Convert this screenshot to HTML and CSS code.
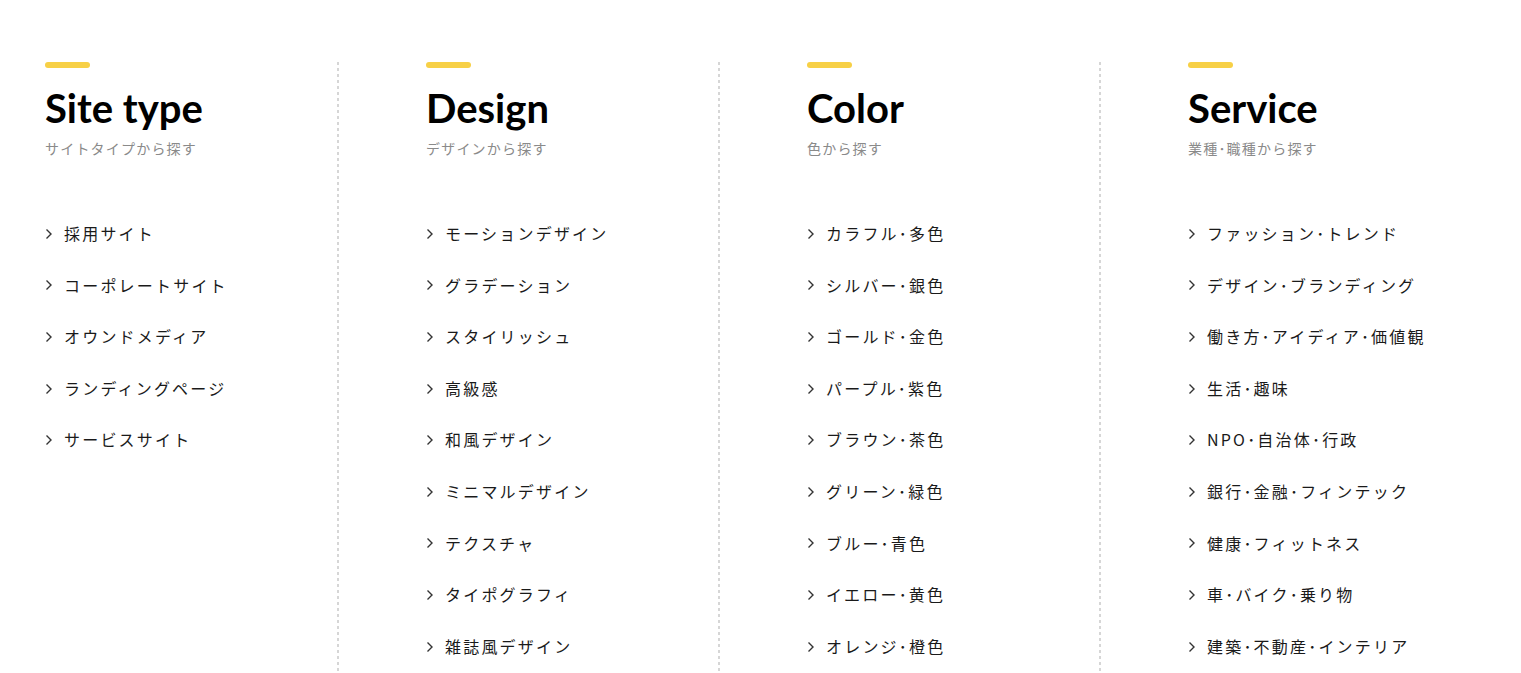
FILE: index.html
```html
<!DOCTYPE html>
<html lang="ja">
<head>
<meta charset="utf-8">
<title>Categories</title>
<link rel="stylesheet" href="styles.css">
</head>
<body>
<div class="cats">
  <section class="col">
    <span class="bar"></span>
    <h2 class="title">Site type</h2>
    <p class="sub">サイトタイプから探す</p>
    <ul class="list">
      <li><svg class="chev" viewBox="0 0 8 12"><polyline points="1.5,1.5 6,6 1.5,10.5"/></svg>採用サイト</li>
      <li><svg class="chev" viewBox="0 0 8 12"><polyline points="1.5,1.5 6,6 1.5,10.5"/></svg>コーポレートサイト</li>
      <li><svg class="chev" viewBox="0 0 8 12"><polyline points="1.5,1.5 6,6 1.5,10.5"/></svg>オウンドメディア</li>
      <li><svg class="chev" viewBox="0 0 8 12"><polyline points="1.5,1.5 6,6 1.5,10.5"/></svg>ランディングページ</li>
      <li><svg class="chev" viewBox="0 0 8 12"><polyline points="1.5,1.5 6,6 1.5,10.5"/></svg>サービスサイト</li>
    </ul>
  </section>
  <section class="col">
    <span class="bar"></span>
    <h2 class="title">Design</h2>
    <p class="sub">デザインから探す</p>
    <ul class="list">
      <li><svg class="chev" viewBox="0 0 8 12"><polyline points="1.5,1.5 6,6 1.5,10.5"/></svg>モーションデザイン</li>
      <li><svg class="chev" viewBox="0 0 8 12"><polyline points="1.5,1.5 6,6 1.5,10.5"/></svg>グラデーション</li>
      <li><svg class="chev" viewBox="0 0 8 12"><polyline points="1.5,1.5 6,6 1.5,10.5"/></svg>スタイリッシュ</li>
      <li><svg class="chev" viewBox="0 0 8 12"><polyline points="1.5,1.5 6,6 1.5,10.5"/></svg>高級感</li>
      <li><svg class="chev" viewBox="0 0 8 12"><polyline points="1.5,1.5 6,6 1.5,10.5"/></svg>和風デザイン</li>
      <li><svg class="chev" viewBox="0 0 8 12"><polyline points="1.5,1.5 6,6 1.5,10.5"/></svg>ミニマルデザイン</li>
      <li><svg class="chev" viewBox="0 0 8 12"><polyline points="1.5,1.5 6,6 1.5,10.5"/></svg>テクスチャ</li>
      <li><svg class="chev" viewBox="0 0 8 12"><polyline points="1.5,1.5 6,6 1.5,10.5"/></svg>タイポグラフィ</li>
      <li><svg class="chev" viewBox="0 0 8 12"><polyline points="1.5,1.5 6,6 1.5,10.5"/></svg>雑誌風デザイン</li>
    </ul>
  </section>
  <section class="col">
    <span class="bar"></span>
    <h2 class="title">Color</h2>
    <p class="sub">色から探す</p>
    <ul class="list">
      <li><svg class="chev" viewBox="0 0 8 12"><polyline points="1.5,1.5 6,6 1.5,10.5"/></svg>カラフル･多色</li>
      <li><svg class="chev" viewBox="0 0 8 12"><polyline points="1.5,1.5 6,6 1.5,10.5"/></svg>シルバー･銀色</li>
      <li><svg class="chev" viewBox="0 0 8 12"><polyline points="1.5,1.5 6,6 1.5,10.5"/></svg>ゴールド･金色</li>
      <li><svg class="chev" viewBox="0 0 8 12"><polyline points="1.5,1.5 6,6 1.5,10.5"/></svg>パープル･紫色</li>
      <li><svg class="chev" viewBox="0 0 8 12"><polyline points="1.5,1.5 6,6 1.5,10.5"/></svg>ブラウン･茶色</li>
      <li><svg class="chev" viewBox="0 0 8 12"><polyline points="1.5,1.5 6,6 1.5,10.5"/></svg>グリーン･緑色</li>
      <li><svg class="chev" viewBox="0 0 8 12"><polyline points="1.5,1.5 6,6 1.5,10.5"/></svg>ブルー･青色</li>
      <li><svg class="chev" viewBox="0 0 8 12"><polyline points="1.5,1.5 6,6 1.5,10.5"/></svg>イエロー･黄色</li>
      <li><svg class="chev" viewBox="0 0 8 12"><polyline points="1.5,1.5 6,6 1.5,10.5"/></svg>オレンジ･橙色</li>
    </ul>
  </section>
  <section class="col last">
    <span class="bar"></span>
    <h2 class="title">Service</h2>
    <p class="sub">業種･職種から探す</p>
    <ul class="list">
      <li><svg class="chev" viewBox="0 0 8 12"><polyline points="1.5,1.5 6,6 1.5,10.5"/></svg>ファッション･トレンド</li>
      <li><svg class="chev" viewBox="0 0 8 12"><polyline points="1.5,1.5 6,6 1.5,10.5"/></svg>デザイン･ブランディング</li>
      <li><svg class="chev" viewBox="0 0 8 12"><polyline points="1.5,1.5 6,6 1.5,10.5"/></svg>働き方･アイディア･価値観</li>
      <li><svg class="chev" viewBox="0 0 8 12"><polyline points="1.5,1.5 6,6 1.5,10.5"/></svg>生活･趣味</li>
      <li><svg class="chev" viewBox="0 0 8 12"><polyline points="1.5,1.5 6,6 1.5,10.5"/></svg>NPO･自治体･行政</li>
      <li><svg class="chev" viewBox="0 0 8 12"><polyline points="1.5,1.5 6,6 1.5,10.5"/></svg>銀行･金融･フィンテック</li>
      <li><svg class="chev" viewBox="0 0 8 12"><polyline points="1.5,1.5 6,6 1.5,10.5"/></svg>健康･フィットネス</li>
      <li><svg class="chev" viewBox="0 0 8 12"><polyline points="1.5,1.5 6,6 1.5,10.5"/></svg>車･バイク･乗り物</li>
      <li><svg class="chev" viewBox="0 0 8 12"><polyline points="1.5,1.5 6,6 1.5,10.5"/></svg>建築･不動産･インテリア</li>
    </ul>
  </section>
</div>
</body>
</html>
```

FILE: styles.css
```css
html, body {
  margin: 0;
  padding: 0;
  background: #fff;
}
body {
  font-family: "Noto Sans CJK JP", "Noto Sans", sans-serif;
  color: #1a1a1a;
}
.cats {
  display: flex;
  gap: 87px;
  padding: 62px 0 0 45px;
  align-items: stretch;
}
.col {
  width: 294px;
  box-sizing: border-box;
  padding: 0 10px 60px 0;
  background-image: linear-gradient(#d6d6d6 0 3px, transparent 3px 6px);
  background-size: 2px 6px;
  background-repeat: repeat-y;
  background-position: right top;
}
.col.last {
  background: none;
}
.bar {
  display: block;
  width: 45px;
  height: 6px;
  border-radius: 3px;
  background: #f7d046;
}
.title {
  margin: 16px 0 0;
  font-family: "Lato", "Noto Sans", sans-serif;
  font-weight: 700;
  font-size: 40px;
  line-height: 48px;
  color: #000;
}
.sub {
  margin: 6px 0 0;
  font-size: 14px;
  line-height: 20px;
  letter-spacing: 1.2px;
  color: #8a8a8a;
}
.list {
  list-style: none;
  margin: 63px 0 0;
  padding: 0;
  display: flex;
  flex-direction: column;
  gap: 26px;
}
.list li {
  display: flex;
  align-items: center;
  font-size: 16px;
  line-height: 25.6px;
  letter-spacing: 2.2px;
  color: #1a1a1a;
  white-space: nowrap;
}
.chev {
  width: 8px;
  height: 12px;
  margin-right: 11px;
  flex: none;
  fill: none;
  stroke: #333;
  stroke-width: 1.4;
}
```
